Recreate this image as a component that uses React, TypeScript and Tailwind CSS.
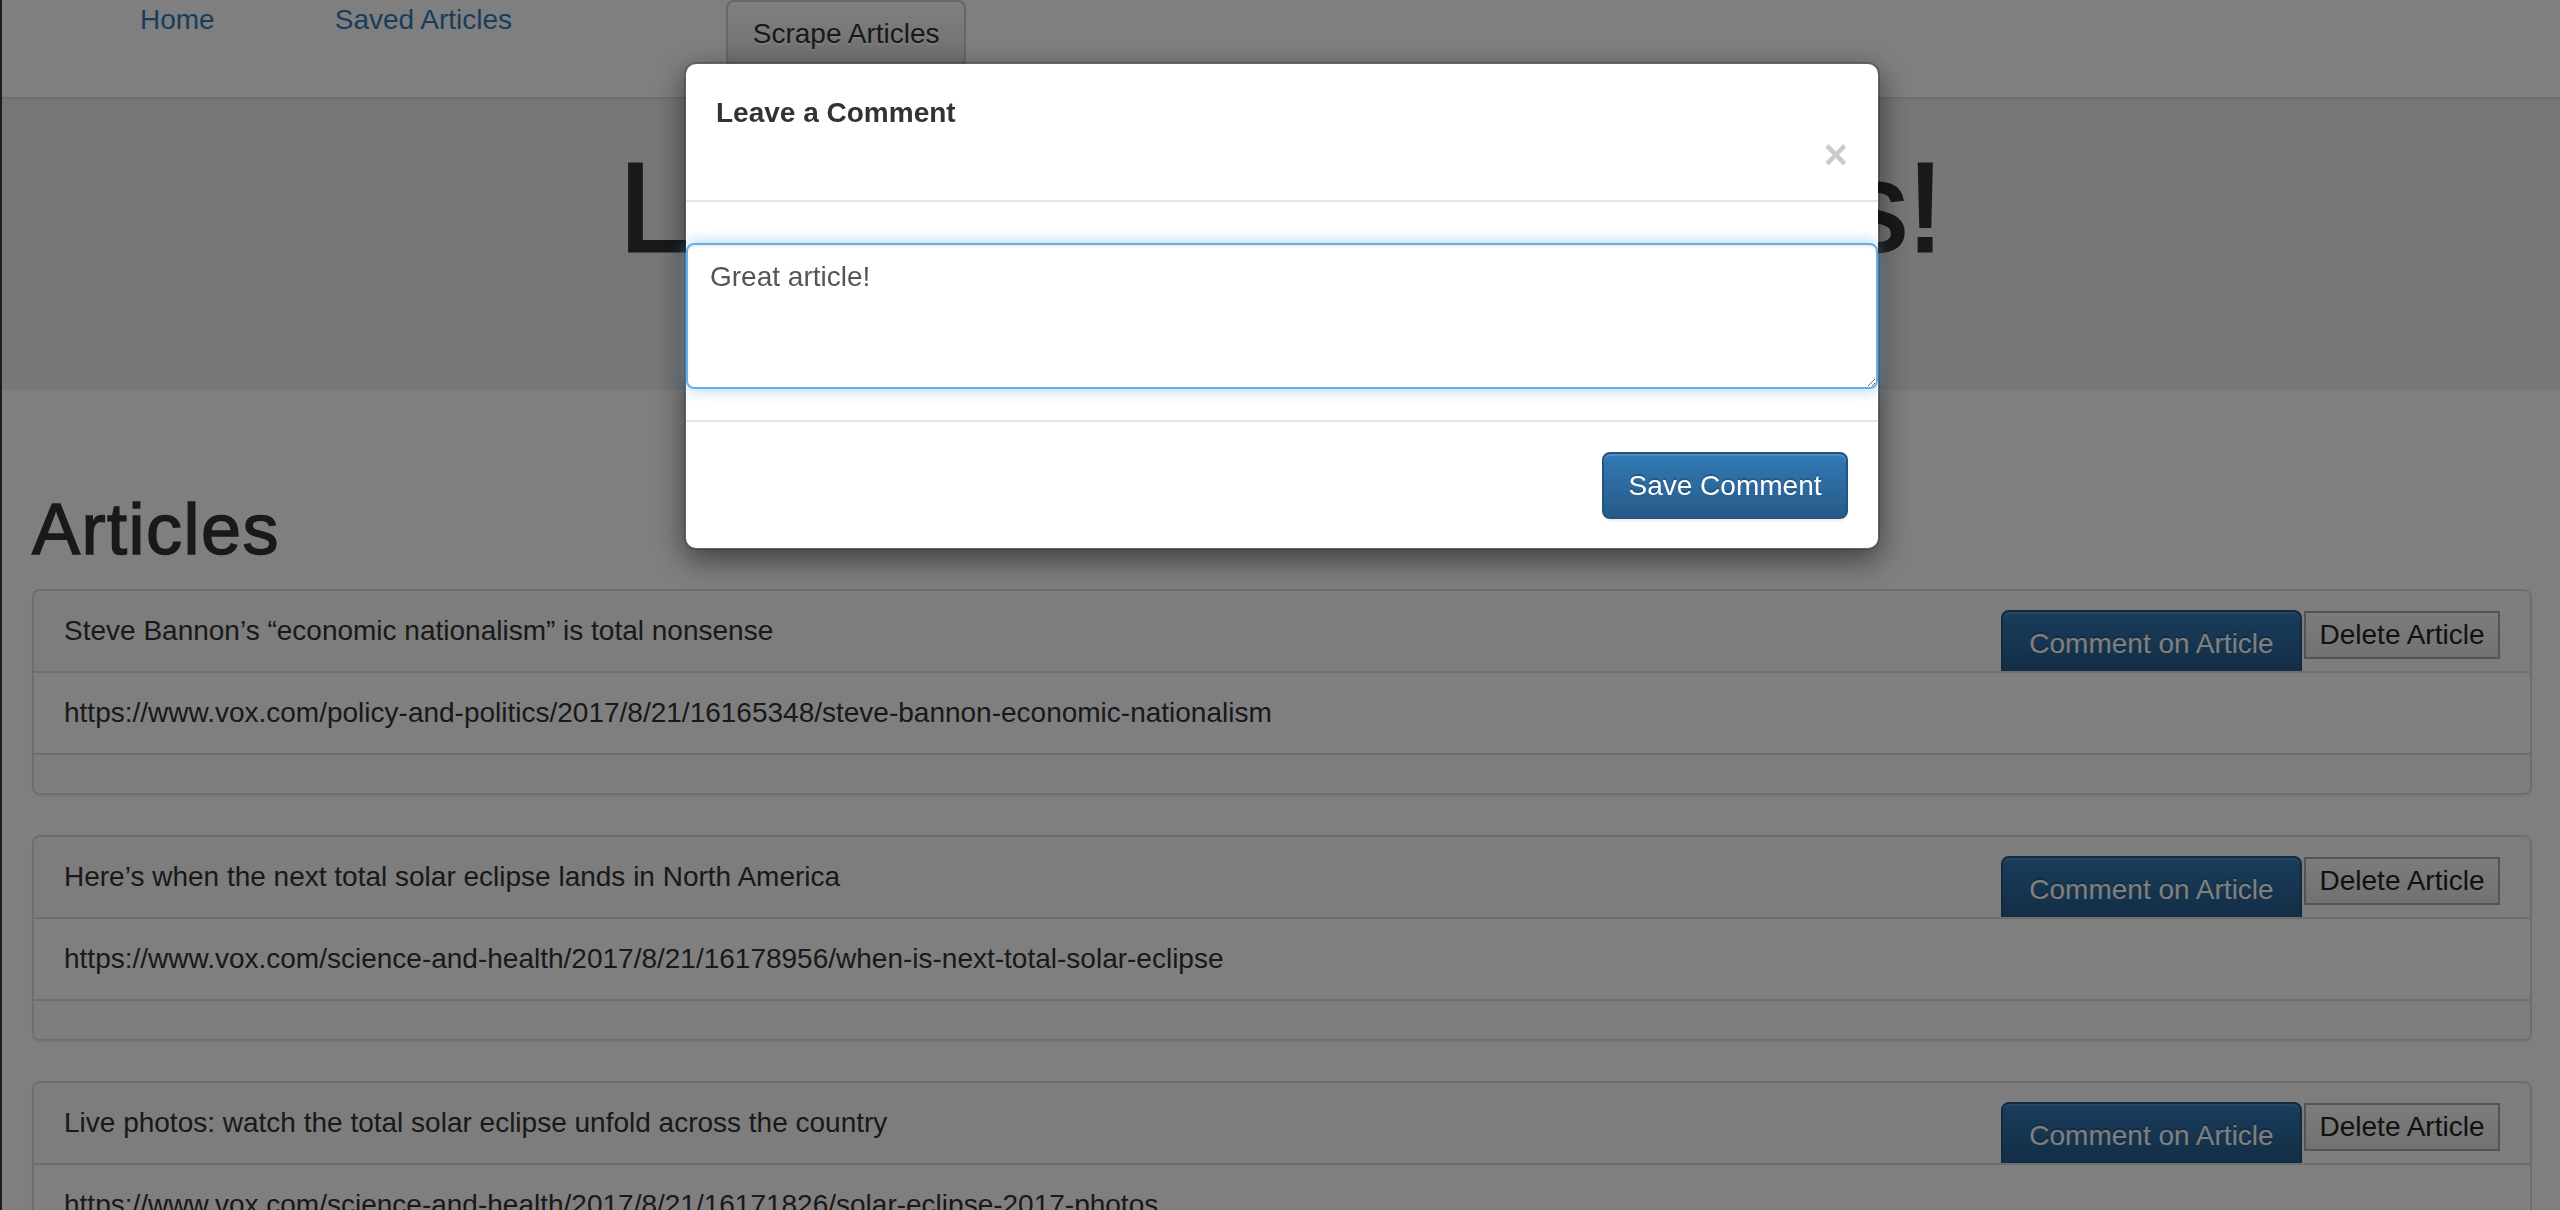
const articles = [
  {
    title: 'Steve Bannon’s “economic nationalism” is total nonsense',
    url: 'https://www.vox.com/policy-and-politics/2017/8/21/16165348/steve-bannon-economic-nationalism',
  },
  {
    title: 'Here’s when the next total solar eclipse lands in North America',
    url: 'https://www.vox.com/science-and-health/2017/8/21/16178956/when-is-next-total-solar-eclipse',
  },
  {
    title: 'Live photos: watch the total solar eclipse unfold across the country',
    url: 'https://www.vox.com/science-and-health/2017/8/21/16171826/solar-eclipse-2017-photos',
  },
];

function ArticlePanel({ title, url }: { title: string; url: string }) {
  return (
    <div className="mb-[40px] overflow-hidden rounded-[8px] border-2 border-[#ddd] bg-white shadow-[0_2px_2px_rgba(0,0,0,0.05)]">
      <div className="flex h-[82px] items-start justify-between overflow-hidden border-b-2 border-[#ddd] bg-[#fafafa] px-[30px]">
        <p className="pt-[20px] leading-[40px]">{title}</p>
        <div className="flex shrink-0 gap-[2px] pt-[19px]">
          <button className="flex h-[68px] w-[301px] items-center justify-center rounded-[8px] border-2 border-[#245580] bg-linear-to-b from-[#337ab7] to-[#265a88] text-[28px] text-white shadow-[inset_0_2px_0_rgba(255,255,255,0.15)] [text-shadow:0_-2px_0_rgba(0,0,0,0.2)]">
            Comment on Article
          </button>
          <button className="mt-[1px] flex h-[48px] w-[196px] items-center justify-center border-2 border-[#a9a9a9] bg-linear-to-b from-[#f8f8f8] to-[#e4e4e4] text-[28px] text-[#222]">
            Delete Article
          </button>
        </div>
      </div>
      <div className="h-[82px] border-b-2 border-[#ddd] px-[30px] py-[20px] leading-[40px]">{url}</div>
      <div className="h-[38px] bg-[#fcfcfc]" />
    </div>
  );
}

export default function App() {
  return (
    <div className="relative h-screen overflow-hidden bg-white font-['Liberation_Sans',Arial,sans-serif] text-[28px] text-[#333]">
      <div className="pl-[2px]">
        {/* top nav */}
        <nav className="flex h-[99px] items-start border-b-2 border-[#ddd]">
          <a className="ml-[138px] leading-[40px] text-[#337ab7]">Home</a>
          <a className="ml-[120px] leading-[40px] text-[#337ab7]">Saved Articles</a>
          <button className="ml-[214px] flex h-[68px] w-[240px] items-center justify-center rounded-[8px] border-2 border-[#ccc] bg-linear-to-b from-white to-[#e0e0e0] text-[28px] text-[#333] [text-shadow:0_2px_0_#fff]">
            Scrape Articles
          </button>
        </nav>

        <div className="h-[291px] bg-[#eee] pt-[40px]">
          <h1 className="text-center text-[126px] leading-[1.1] text-[#333] [-webkit-text-stroke:3px_#333]">
            Latest Scraped Articles!
          </h1>
        </div>

        <div className="pl-[30px] pr-[28px]">
          <h1 className="mt-[100px] mb-[20px] text-[72px] leading-[1.1] tracking-[1.5px] [-webkit-text-stroke:1.5px_#333]">
            Articles
          </h1>
          {articles.map((a, i) => (
            <ArticlePanel key={i} title={a.title} url={a.url} />
          ))}
        </div>
      </div>

      {/* backdrop */}
      <div className="fixed inset-0 bg-black/50" />
      <div className="fixed top-0 bottom-0 left-0 w-[2px] bg-[#1e1a20]" />

      {/* modal */}
      <div className="fixed inset-0 flex justify-center pt-[62px] pl-[4px]">
        <div className="h-fit w-[1196px] rounded-[12px] border-2 border-black/20 bg-white bg-clip-padding shadow-[0_10px_30px_rgba(0,0,0,0.5)]">
          <div className="flex flex-col border-b-2 border-[#e5e5e5] px-[30px] pt-[34px] pb-[29px]">
            <h5 className="h-[31px] text-[28px] leading-[1.1] font-bold text-[#333]">Leave a Comment</h5>
            <div className="flex h-[42px] items-start justify-end">
              <button className="mt-[5px] text-[42px] leading-none font-bold text-black opacity-20 [text-shadow:0_2px_0_#fff]">×</button>
            </div>
          </div>
          <div className="pt-[41px] pb-[31px]">
            <textarea
              defaultValue="Great article!"
              className="block h-[146px] w-full rounded-[8px] border-2 border-[#66afe9] px-[22px] py-[12px] text-[28px] leading-[40px] text-[#555] shadow-[inset_0_2px_2px_rgba(0,0,0,0.075),0_0_16px_rgba(102,175,233,0.6)] outline-none"
            />
          </div>
          <div className="flex justify-end border-t-2 border-[#e5e5e5] pt-[30px] pr-[30px] pb-[29px]">
            <button className="flex h-[67px] w-[246px] items-center justify-center rounded-[8px] border-2 border-[#245580] bg-linear-to-b from-[#337ab7] to-[#265a88] text-[28px] text-white shadow-[inset_0_2px_0_rgba(255,255,255,0.15),0_2px_2px_rgba(0,0,0,0.075)] [text-shadow:0_-2px_0_rgba(0,0,0,0.2)]">
              Save Comment
            </button>
          </div>
        </div>
      </div>
    </div>
  );
}
